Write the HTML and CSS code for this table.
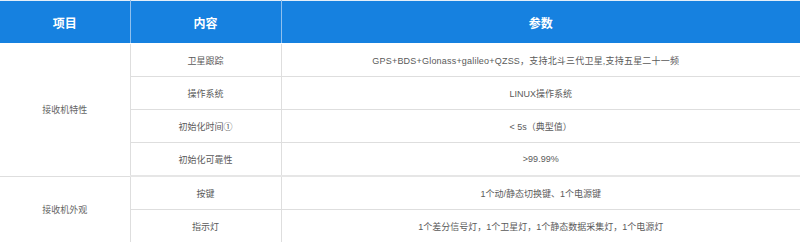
FILE: index.html
```html
<!DOCTYPE html>
<html lang="zh-CN">
<head>
<meta charset="utf-8">
<title>参数表</title>
<link rel="stylesheet" href="styles.css">
</head>
<body>
<table class="spec">
  <colgroup>
    <col class="c1"><col class="c2"><col class="c3">
  </colgroup>
  <thead>
    <tr><th>项目</th><th>内容</th><th>参数</th></tr>
  </thead>
  <tbody>
    <tr><td class="group" rowspan="4">接收机特性</td><td>卫星跟踪</td><td class="shift">GPS+BDS+Glonass+galileo+QZSS，支持北斗三代卫星,支持五星二十一频</td></tr>
    <tr><td>操作系统</td><td>LINUX操作系统</td></tr>
    <tr><td>初始化时间①</td><td>&lt; 5s（典型值）</td></tr>
    <tr class="last"><td>初始化可靠性</td><td>&gt;99.99%</td></tr>
    <tr><td class="group end" rowspan="2">接收机外观</td><td>按键</td><td>1个动/静态切换键、1个电源键</td></tr>
    <tr class="end"><td>指示灯</td><td>1个差分信号灯，1个卫星灯，1个静态数据采集灯，1个电源灯</td></tr>
  </tbody>
</table>
</body>
</html>
```
FILE: styles.css
```css
html, body {
  margin: 0;
  padding: 0;
  background: #ffffff;
}
.spec {
  width: 800px;
  border-collapse: collapse;
  table-layout: fixed;
  font-family: "Liberation Sans", "Noto Sans CJK SC", sans-serif;
  border-top: 1px solid #e3eef9;
}
.c1 { width: 130px; }
.c2 { width: 151px; }
.c3 { width: 519px; }
.spec th {
  background: #1681e0;
  color: #ffffff;
  font-size: 12px;
  font-weight: bold;
  height: 42px;
  padding: 0;
  text-align: center;
  border-left: 1px solid #8fc0ee;
  border-bottom: 1px solid #ffffff;
}
.spec th:first-child { border-left: none; }
.spec td {
  height: 32px;
  padding: 0;
  text-align: center;
  font-size: 9px;
  color: #5a5a5a;
  border: 1px solid #dedede;
}
.spec td.shift { padding-right: 30px; letter-spacing: 0.2px; }
.spec td.group { color: #666666; border-left: none; }
.spec td:last-child { border-right: none; }
.spec thead + tbody tr:first-child td { border-top: none; }
.spec tr.last td { border-bottom: 2px solid #e6e6e6; }
.spec tr.end td, .spec td.end { border-bottom: none; }
```
